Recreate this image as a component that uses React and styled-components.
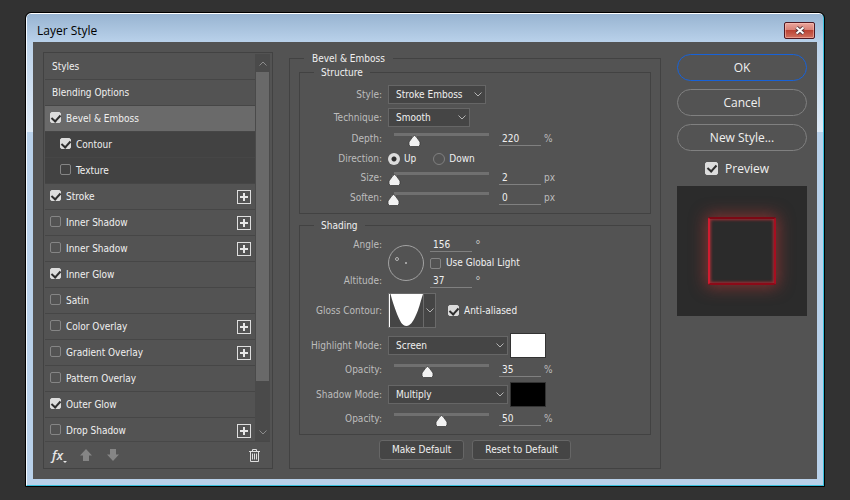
import React, { useState } from 'react';
import styled, { createGlobalStyle } from 'styled-components';

const effects = [
  { id: 'bevel', name: 'Bevel & Emboss', checked: true, active: true },
  { id: 'contour', name: 'Contour', checked: true, sub: true },
  { id: 'texture', name: 'Texture', sub: true },
  { id: 'stroke', name: 'Stroke', checked: true, canAdd: true },
  { id: 'inner-shadow-1', name: 'Inner Shadow', canAdd: true },
  { id: 'inner-shadow-2', name: 'Inner Shadow', canAdd: true },
  { id: 'inner-glow', name: 'Inner Glow', checked: true },
  { id: 'satin', name: 'Satin' },
  { id: 'color-overlay', name: 'Color Overlay', canAdd: true },
  { id: 'gradient-overlay', name: 'Gradient Overlay', canAdd: true },
  { id: 'pattern-overlay', name: 'Pattern Overlay' },
  { id: 'outer-glow', name: 'Outer Glow', checked: true },
  { id: 'drop-shadow', name: 'Drop Shadow', canAdd: true },
];

const Chevron = ({ up }) => (
  <svg width="8" height="5" viewBox="0 0 8 5" fill="none" stroke="currentColor">
    <path d={up ? 'M0.5 4.5 4 1 7.5 4.5' : 'M0.5 0.5 4 4 7.5 0.5'} />
  </svg>
);

const Dropdown = ({ id, value, options, width }) => (
  <SelectBox $width={width}>
    <select id={id} defaultValue={value}>
      {options.map((option) => (
        <option key={option}>{option}</option>
      ))}
    </select>
    <Chevron />
  </SelectBox>
);

const SliderRow = ({ id, label, value: initial, max, unit }) => {
  const [value, setValue] = useState(initial);
  return (
    <Row>
      <FieldLabel htmlFor={id}>{label}:</FieldLabel>
      <Slider
        id={id}
        min={0}
        max={max}
        value={value}
        onChange={(e) => setValue(e.target.value)}
      />
      <NumberField
        aria-label={`${label} value`}
        value={value}
        onChange={(e) => setValue(e.target.value)}
      />
      <Unit>{unit}</Unit>
    </Row>
  );
};

const EffectList = () => (
  <Panel>
    <ListArea>
      <List>
        <Item>Styles</Item>
        <Item>Blending Options</Item>
        {effects.map(({ id, name, checked, active, sub, canAdd }) => (
          <Item key={id} $active={active} $sub={sub}>
            <CheckLabel>
              <Checkbox defaultChecked={checked} />
              {name}
            </CheckLabel>
            {canAdd && (
              <IconButton aria-label={`Add ${name}`}>
                <svg width="14" height="14" viewBox="0 0 14 14" fill="none">
                  <rect x="0.5" y="0.5" width="13" height="13" stroke="#dedede" />
                  <path d="M7 3v8M3 7h8" stroke="#e6e6e6" strokeWidth="2" />
                </svg>
              </IconButton>
            )}
          </Item>
        ))}
      </List>
      <Scrollbar>
        <button aria-label="Scroll up">
          <Chevron up />
        </button>
        <div className="track">
          <div className="thumb" />
        </div>
        <button aria-label="Scroll down">
          <Chevron />
        </button>
      </Scrollbar>
    </ListArea>
    <ToolBar>
      <IconButton className="fx" aria-label="Effects menu">
        <i>fx</i>
        <svg width="4" height="2" viewBox="0 0 4 2" fill="#e6e6e6">
          <path d="M0 0h4L2 2z" />
        </svg>
      </IconButton>
      <IconButton aria-label="Move up">
        <svg width="12" height="12" viewBox="0 0 12 12" fill="#858585">
          <path d="M6 0l6 6.5H9V12H3V6.5H0z" />
        </svg>
      </IconButton>
      <IconButton aria-label="Move down">
        <svg width="12" height="12" viewBox="0 0 12 12" fill="#858585">
          <path d="M6 12l6-6.5H9V0H3v5.5H0z" />
        </svg>
      </IconButton>
      <IconButton className="trash" aria-label="Delete effect">
        <svg width="11" height="13" viewBox="0 0 11 13" fill="none" stroke="#dedede">
          <path d="M0 2.5h11M3.5 2V0.5h4V2M1.5 3v9.5h8V3M3.5 4.5v6M5.5 4.5v6M7.5 4.5v6" />
        </svg>
      </IconButton>
    </ToolBar>
  </Panel>
);

const Structure = () => (
  <Group>
    <legend>Structure</legend>
    <Row $height={23}>
      <FieldLabel htmlFor="style">Style:</FieldLabel>
      <Dropdown
        id="style"
        value="Stroke Emboss"
        options={['Outer Bevel', 'Inner Bevel', 'Emboss', 'Stroke Emboss']}
        width={98}
      />
    </Row>
    <Row $height={23}>
      <FieldLabel htmlFor="technique">Technique:</FieldLabel>
      <Dropdown
        id="technique"
        value="Smooth"
        options={['Smooth', 'Chisel Hard', 'Chisel Soft']}
        width={82}
      />
    </Row>
    <SliderRow id="depth" label="Depth" value={220} max={1000} unit="%" />
    <Row $height={19} role="radiogroup" aria-label="Direction">
      <FieldLabel as="span">Direction:</FieldLabel>
      <RadioLabel>
        <Radio name="direction" defaultChecked />
        Up
      </RadioLabel>
      <RadioLabel>
        <Radio name="direction" />
        Down
      </RadioLabel>
    </Row>
    <SliderRow id="size" label="Size" value={2} max={250} unit="px" />
    <SliderRow id="soften" label="Soften" value={0} max={16} unit="px" />
  </Group>
);

const Shading = () => (
  <Group>
    <legend>Shading</legend>
    <AngleGrid>
      <FieldLabel htmlFor="angle">Angle:</FieldLabel>
      <svg className="dial" width="36" height="36" viewBox="0 0 36 36" fill="none">
        <circle cx="18" cy="18" r="17.5" stroke="#a2a2a2" />
        <circle cx="9" cy="14" r="1.5" stroke="#b4b4b4" />
        <path d="M17 18h2" stroke="#a2a2a2" strokeWidth="2" />
      </svg>
      <div className="value">
        <NumberField id="angle" defaultValue="156" />
        <Unit>°</Unit>
      </div>
      <CheckLabel className="global">
        <Checkbox />
        Use Global Light
      </CheckLabel>
      <FieldLabel htmlFor="altitude">Altitude:</FieldLabel>
      <div className="value">
        <NumberField id="altitude" defaultValue="37" />
        <Unit>°</Unit>
      </div>
    </AngleGrid>
    <Row $height={41}>
      <FieldLabel as="span">Gloss Contour:</FieldLabel>
      <ContourPicker aria-label="Gloss Contour">
        <svg width="34" height="33" viewBox="0 0 34 33" fill="#fff">
          <path d="M0 0h1v33H0zM1.500 0H34C31 9 30 15 27 21C24 28 21 32 17.500 32C13 32 11 27 8 20C5 12 3 6 1.500 0z" />
        </svg>
        <span>
          <Chevron />
        </span>
      </ContourPicker>
      <CheckLabel className="anti">
        <Checkbox defaultChecked />
        Anti-aliased
      </CheckLabel>
    </Row>
    <Row $height={29}>
      <FieldLabel htmlFor="highlight">Highlight Mode:</FieldLabel>
      <Dropdown
        id="highlight"
        value="Screen"
        options={['Normal', 'Screen', 'Multiply']}
        width={120}
      />
      <Swatch aria-label="Highlight color" $color="#fff" />
    </Row>
    <SliderRow id="h-opacity" label="Opacity" value={35} max={100} unit="%" />
    <Row $height={29}>
      <FieldLabel htmlFor="shadow">Shadow Mode:</FieldLabel>
      <Dropdown
        id="shadow"
        value="Multiply"
        options={['Normal', 'Screen', 'Multiply']}
        width={120}
      />
      <Swatch aria-label="Shadow color" $color="#000" />
    </Row>
    <SliderRow id="s-opacity" label="Opacity" value={50} max={100} unit="%" />
  </Group>
);

const App = () => {
  return (
    <>
      <GlobalStyle />
      <Window>
        <TitleBar>
          <h1>Layer Style</h1>
          <CloseButton aria-label="Close">
            <svg width="12" height="9" viewBox="0 0 12 9" fill="none">
              <path d="M2.500 1.500l7 6M9.500 1.500l-7 6" stroke="#5a3a40" strokeWidth="4" />
              <path d="M2.500 1.500l7 6M9.500 1.500l-7 6" stroke="#fff" strokeWidth="2" />
            </svg>
          </CloseButton>
        </TitleBar>
        <Content>
          <EffectList />
          <Settings>
            <legend>Bevel &amp; Emboss</legend>
            <Structure />
            <Shading />
            <div className="defaults">
              <SmallButton>Make Default</SmallButton>
              <SmallButton>Reset to Default</SmallButton>
            </div>
          </Settings>
          <Actions>
            <PillButton $primary>OK</PillButton>
            <PillButton>Cancel</PillButton>
            <PillButton>New Style...</PillButton>
            <PreviewLabel>
              <Checkbox $size={13} defaultChecked />
              Preview
            </PreviewLabel>
            <Preview>
              <div />
            </Preview>
          </Actions>
        </Content>
      </Window>
    </>
  );
};

export default App;

const GlobalStyle = createGlobalStyle`
  * {
    box-sizing: border-box;
  }
  body {
    margin: 0;
    padding: 12px 25px;
    background: #323232;
    color: #f0f0f0;
    font-family: 'DejaVu Sans Condensed', 'Noto Sans', sans-serif;
    font-size: 10px;
    line-height: 14px;
  }
  button, input, select {
    margin: 0;
    padding: 0;
    font: inherit;
    color: inherit;
  }
`;

const Window = styled.main`
  border: 1px solid #39bfdc;
  border-top-color: #fff;
  border-left-color: #f4f9ff;
  border-radius: 5px 5px 0 0;
  outline: 1px solid #000;
  margin: 1px;
  padding: 0 6px 6px;
  background: linear-gradient(#b0cae4, #dfeaf6) 0 0 / 100% 118px no-repeat #b9d1ea;
`;

const TitleBar = styled.header`
  display: flex;
  align-items: center;
  justify-content: space-between;
  height: 28px;
  margin: 0 -6px;
  padding: 5px 8px 0 10px;
  border-radius: 4px 4px 0 0;
  background: linear-gradient(#98b4d1, #b9d1ea);
  h1 {
    margin: 0;
    color: #000;
    font: 12px/16px 'Open Sans', sans-serif;
  }
`;

const CloseButton = styled.button`
  display: flex;
  align-items: center;
  justify-content: center;
  width: 31px;
  height: 17px;
  border: 1px solid #4f1822;
  border-radius: 2px;
  background: linear-gradient(#e9a59d, #d98278 45%, #bb4334 50%, #d0705f);
  box-shadow: inset 0 0 0 1px rgba(255, 200, 190, 0.5);
`;

const Content = styled.div`
  display: grid;
  grid-template-columns: 230px 1fr 130px;
  column-gap: 16px;
  padding: 10px;
  background: #535353;
`;

const Panel = styled.section`
  display: flex;
  flex-direction: column;
  padding: 1px 2px 0 1px;
  border: 1px solid #424242;
`;

const ListArea = styled.div`
  display: flex;
  flex: 1 1 0;
  min-height: 0;
  border-bottom: 1px solid #484848;
`;

const List = styled.ul`
  flex: 1;
  margin: 0;
  padding: 0;
  overflow: hidden;
  list-style: none;
`;

const Item = styled.li`
  display: flex;
  align-items: center;
  justify-content: space-between;
  height: 26px;
  padding: 0 4px 0 7px;
  border-bottom: 1px solid #464646;
  background: ${(props) =>
    props.$active ? '#6a6a6a' : props.$sub ? '#424242' : 'transparent'};
  label {
    margin-left: ${(props) => (props.$sub ? '8px' : '-2px')};
  }
  input {
    margin-bottom: 2px;
  }
`;

const CheckLabel = styled.label`
  display: flex;
  align-items: center;
  gap: 5px;
`;

const Checkbox = styled.input.attrs({ type: 'checkbox' })`
  appearance: none;
  flex: none;
  display: flex;
  justify-content: center;
  width: ${(props) => props.$size || 11}px;
  height: ${(props) => props.$size || 11}px;
  border: 1px solid #858585;
  border-radius: 2px;
  &:checked {
    border-color: #dcdcdc;
    background: #dcdcdc;
  }
  &:checked::before {
    content: '';
    width: 4px;
    height: 7px;
    border: solid #2e2e2e;
    border-width: 0 2px 2px 0;
    transform: rotate(42deg);
  }
`;

const IconButton = styled.button`
  display: flex;
  border: 0;
  background: none;
  cursor: pointer;
`;

const Scrollbar = styled.div`
  display: flex;
  flex-direction: column;
  width: 15px;
  padding: 0 1px;
  background: #4a4a4a;
  button {
    display: flex;
    align-items: center;
    justify-content: center;
    height: 18px;
    border: 0;
    background: none;
    color: #8c8c8c;
  }
  .track {
    flex: 1;
  }
  .thumb {
    height: 88%;
    background: #696969;
  }
`;

const ToolBar = styled.div`
  display: flex;
  align-items: center;
  gap: 15px;
  height: 26px;
  padding: 0 10px 0 7px;
  .fx {
    align-items: flex-end;
    margin-right: -2px;
    color: #e6e6e6;
    i {
      font: italic 600 13px/16px 'Open Sans', sans-serif;
    }
  }
  .trash {
    margin-left: auto;
  }
`;

const Settings = styled.fieldset`
  min-width: 0;
  margin: 0;
  padding: 1px 9px 8px;
  border: 1px solid #424242;
  > legend {
    margin-left: 5px;
    padding: 0 8px;
    line-height: 13px;
  }
  .defaults {
    display: flex;
    justify-content: center;
    gap: 8px;
  }
`;

const Group = styled.fieldset`
  min-width: 0;
  margin: 0 0 5px;
  padding: 4px 0 5px;
  border: 1px solid #424242;
  > legend {
    margin-left: 14px;
    padding: 0 7px;
    line-height: 13px;
  }
`;

const Row = styled.div`
  display: flex;
  align-items: center;
  height: ${(props) => props.$height || 20}px;
  .anti {
    margin-left: 12px;
  }
`;

const FieldLabel = styled.label`
  flex: none;
  width: 82px;
  margin-right: 6px;
  color: #bdbdbd;
  text-align: right;
`;

const SelectBox = styled.div`
  display: grid;
  align-items: center;
  width: ${(props) => props.$width}px;
  height: 19px;
  border: 1px solid #666;
  background: #454545;
  color: #f0f0f0;
  > * {
    grid-area: 1 / 1;
  }
  select {
    appearance: none;
    width: 100%;
    height: 17px;
    padding-left: 7px;
    border: 0;
    background: none;
  }
  svg {
    justify-self: end;
    margin-right: 3px;
    color: #b4b4b4;
    pointer-events: none;
  }
`;

const Slider = styled.input.attrs({ type: 'range' })`
  appearance: none;
  width: 109px;
  height: 16px;
  margin: 0 -1px;
  background: none;
  &::-webkit-slider-runnable-track {
    height: 16px;
    background: linear-gradient(#707070, #707070) 7px 2px / calc(100% - 14px) 3px
      no-repeat;
  }
  &::-webkit-slider-thumb {
    appearance: none;
    width: 13px;
    height: 12px;
    margin-top: 4px;
    border: 0;
    border-radius: 0;
    background: url("data:image/svg+xml,%3Csvg xmlns='http://www.w3.org/2000/svg' viewBox='0 0 13 12'%3E%3Cpath d='M6.500 .5L8 1.500L12 7V10L10.500 11.500H2.500L1 10V7L5 1.500Z' fill='%23f2f2f2' stroke='%233c3c3c' stroke-width='.8'/%3E%3C/svg%3E");
  }
`;

const NumberField = styled.input.attrs({ type: 'text' })`
  width: 42px;
  height: 14px;
  margin: 0 3px 0 4px;
  padding-left: 3px;
  border: 0;
  border-bottom: 1px solid #808080;
  background: none;
`;

const Unit = styled.span`
  color: #bdbdbd;
`;

const RadioLabel = styled.label`
  display: flex;
  align-items: center;
  gap: 4px;
  margin-right: 17px;
`;

const Radio = styled.input.attrs({ type: 'radio' })`
  appearance: none;
  width: 12px;
  height: 12px;
  border: 1px solid #808080;
  border-radius: 50%;
  &:checked {
    border: 0;
    background: radial-gradient(#2e2e2e 2px, #dcdcdc 3px);
  }
`;

const AngleGrid = styled.div`
  display: grid;
  grid-template-columns: 88px 36px 1fr;
  grid-template-rows: repeat(3, 18px);
  align-items: center;
  .dial {
    grid-area: 1 / 2 / 4 / 3;
  }
  .value {
    grid-column: 3;
    display: flex;
    align-items: center;
    margin-left: 2px;
    span {
      font-size: 13px;
    }
  }
  .global {
    grid-column: 3;
    margin-left: 6px;
  }
`;

const ContourPicker = styled.button`
  display: flex;
  width: 48px;
  height: 35px;
  border: 1px solid #6a6a6a;
  background: #454545;
  color: #b4b4b4;
  span {
    display: flex;
    flex: 1;
    align-items: center;
    justify-content: center;
    height: 100%;
    border-left: 1px solid #6a6a6a;
  }
`;

const Swatch = styled.button`
  width: 36px;
  height: 25px;
  margin-left: 2px;
  border: 1px solid #333;
  background: ${(props) => props.$color};
`;

const SmallButton = styled.button`
  height: 20px;
  padding: 0 12px;
  border: 1px solid #666;
  border-radius: 3px;
  background: #454545;
`;

const Actions = styled.aside`
  display: flex;
  flex-direction: column;
  gap: 8px;
  padding-top: 2px;
`;

const PillButton = styled.button`
  height: 27px;
  border: 1px solid ${(props) => (props.$primary ? '#1762d9' : '#808080')};
  border-radius: 14px;
  background: none;
  font: 12px/16px 'Open Sans', sans-serif;
`;

const PreviewLabel = styled(CheckLabel)`
  justify-content: center;
  gap: 7px;
  height: 19px;
  padding-right: 10px;
  font: 12px/16px 'Open Sans', sans-serif;
`;

const Preview = styled.div`
  display: grid;
  place-items: center;
  aspect-ratio: 1;
  background: #2b2b2b;
  div {
    width: 52%;
    height: 52%;
    border: 2px solid;
    border-color: #7c0814 #a80e20 #8c0a18 #d01c30;
    border-radius: 2px;
    box-shadow: 0 0 16px 2px rgba(220, 60, 55, 0.5),
      inset 0 0 3px 1px rgba(210, 50, 60, 0.7);
  }
`;
